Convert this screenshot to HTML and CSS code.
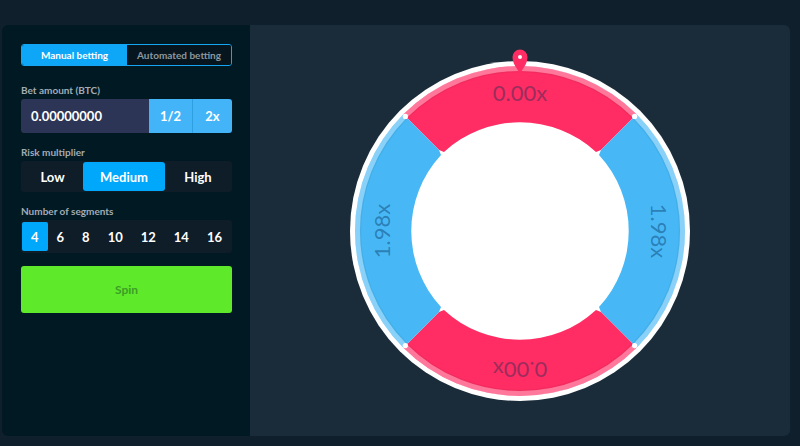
FILE: index.html
```html
<!DOCTYPE html>
<html lang="en">
<head>
  <meta charset="UTF-8" />
  <title>Wheel</title>
  <link rel="stylesheet" href="styles.css">
</head>
<body>
  <div class="game">
    <div class="sidebar">
      <div class="tabs">
        <div class="tab active">Manual betting</div>
        <div class="tab">Automated betting</div>
      </div>

      <div class="field">
        <div class="label">Bet amount (BTC)</div>
        <div class="bet-row">
          <div class="bet-input">0.00000000</div>
          <div class="bet-btn half">1/2</div>
          <div class="bet-btn">2x</div>
        </div>
      </div>

      <div class="field">
        <div class="label">Risk multiplier</div>
        <div class="risk-row">
          <div class="risk low">Low</div>
          <div class="risk medium active">Medium</div>
          <div class="risk high">High</div>
        </div>
      </div>

      <div class="field">
        <div class="label">Number of segments</div>
        <div class="seg-row">
          <div class="seg active">4</div>
          <div class="seg">6</div>
          <div class="seg">8</div>
          <div class="seg">10</div>
          <div class="seg">12</div>
          <div class="seg">14</div>
          <div class="seg">16</div>
        </div>
      </div>

      <div class="spin">Spin</div>
    </div>

    <div class="stage">
      <svg class="wheel" width="340" height="340" viewBox="0 0 340 340">
        <defs>
          <path id="sector" d="M53.33 53.33 A165 165 0 0 1 286.67 53.33 L251 89 L246 91 A112 112 0 0 0 94 91 L89 89 Z" />
        </defs>
        <circle cx="170" cy="170" r="170" fill="#ffffff" />
        <use href="#sector" fill="#ff2d63" />
        <use href="#sector" fill="#47b8f5" transform="rotate(90 170 170)" />
        <use href="#sector" fill="#ff2d63" transform="rotate(180 170 170)" />
        <use href="#sector" fill="#47b8f5" transform="rotate(270 170 170)" />
        <circle cx="170" cy="170" r="162.5" fill="none" stroke="#ffffff" stroke-opacity="0.36" stroke-width="5" />
        <circle cx="170" cy="170" r="159.5" fill="none" stroke="#000000" stroke-opacity="0.05" stroke-width="1.5" />

        <circle cx="55.4" cy="55.4" r="2.6" fill="#ffffff" />
        <circle cx="284.6" cy="55.4" r="2.6" fill="#ffffff" />
        <circle cx="55.4" cy="284.6" r="2.6" fill="#ffffff" />
        <circle cx="284.6" cy="284.6" r="2.6" fill="#ffffff" />

        <g class="seg-text">
          <text x="170" y="31" class="on-red">0.00x</text>
          <text x="170" y="31" class="on-blue" transform="rotate(90 170 170)">1.98x</text>
          <text x="170" y="31" class="on-red" transform="rotate(180 170 170)">0.00x</text>
          <text x="170" y="31" class="on-blue" transform="rotate(270 170 170)">1.98x</text>
        </g>

        <path d="M170 14 C168.5 8 162.5 4 162.5 -4 A7.5 7.5 0 0 1 177.5 -4 C177.5 4 171.5 8 170 14 Z" fill="#ff2d63" />
        <circle cx="170" cy="-4" r="2" fill="#ffffff" />
      </svg>
    </div>
  </div>
</body>
</html>
```

FILE: styles.css
```css
body {
  margin: 0;
  background: #0f1f2b;
  font-family: "Lato", "Open Sans", sans-serif;
}

.game {
  display: flex;
  margin: 25px 10px 0 2px;
  height: 411px;
  border-radius: 6px;
  overflow: hidden;
}

.sidebar {
  width: 211px;
  padding: 19px 18px 0 19px;
  background: #011923;
}

.tabs {
  display: grid;
  grid-template-columns: 105px 1fr;
  height: 20px;
  border: 1px solid #14a6f2;
  border-radius: 3px;
  overflow: hidden;
  margin-bottom: 18px;
}

.tab {
  display: flex;
  align-items: center;
  justify-content: center;
  font-size: 10px;
  font-weight: 700;
  color: #8d979f;
  background: #06151e;
}

.tab.active {
  background: #0ea6f6;
  color: #ffffff;
}

.field {
  margin-bottom: 13px;
}

.label {
  font-size: 10px;
  line-height: 12px;
  font-weight: 700;
  color: #a3acb4;
  margin-bottom: 3px;
}

.bet-row {
  display: flex;
  height: 34px;
  border-radius: 3px;
  overflow: hidden;
}

.bet-input {
  flex: 1;
  display: flex;
  align-items: center;
  padding-left: 10px;
  background: #2c3556;
  color: #ffffff;
  font-size: 13px;
  font-weight: 700;
}

.bet-btn {
  width: 39px;
  display: flex;
  align-items: center;
  justify-content: center;
  background: #43b4f7;
  color: #ffffff;
  font-size: 13px;
  font-weight: 700;
}

.bet-btn.half {
  width: 43px;
  border-right: 1px solid #2e9fe0;
}

.risk-row {
  display: flex;
  height: 29px;
  padding: 1px;
  border-radius: 3px;
  background: #0f1d29;
}

.risk {
  display: flex;
  align-items: center;
  justify-content: center;
  border-radius: 3px;
  color: #ffffff;
  font-size: 13px;
  font-weight: 700;
}

.risk.low { width: 61px; }
.risk.medium { width: 82px; }
.risk.high { flex: 1; }

.risk.active {
  background: #00a8fb;
}

.seg-row {
  display: flex;
  height: 29px;
  padding: 2px 1px;
  border-radius: 3px;
  background: #0f1d29;
}

.seg {
  display: flex;
  align-items: center;
  justify-content: center;
  padding: 0 9px;
  border-radius: 2px;
  color: #ffffff;
  font-size: 13px;
  font-weight: 700;
}

.seg.active {
  background: #00a8fb;
}

.spin {
  display: flex;
  align-items: center;
  justify-content: center;
  height: 47px;
  border-radius: 3px;
  background: #5fe92b;
  color: #3a9f25;
  font-size: 12px;
  font-weight: 700;
}

.stage {
  flex: 1;
  display: flex;
  align-items: center;
  justify-content: center;
  background: #1a2c3a;
}

.wheel {
  overflow: visible;
}

.seg-text text {
  font-family: "Lato", sans-serif;
  font-size: 22px;
  text-anchor: middle;
  dominant-baseline: central;
}

.seg-text .on-red {
  fill: #7a2c5a;
  fill-opacity: 0.75;
}

.seg-text .on-blue {
  fill: #1c5f94;
  fill-opacity: 0.65;
}
```
